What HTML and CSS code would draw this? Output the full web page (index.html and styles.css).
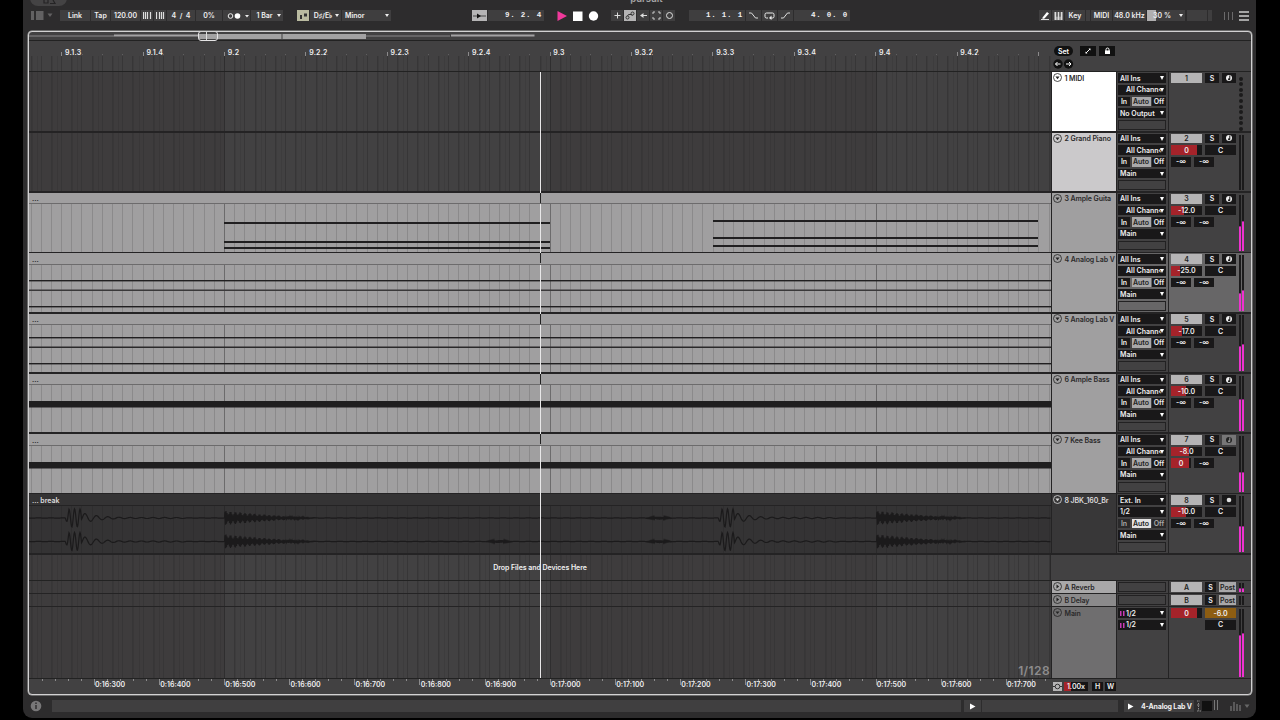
FILE: index.html
```html
<!DOCTYPE html>
<html lang="en">
<head>
    <meta charset="UTF-8">
    <meta name="viewport" content="width=device-width, initial-scale=1.0">
    <title>pursuit</title>
    <link rel="stylesheet" href="styles.css">
</head>
<body>

<div class="window">
    <div class="tab"><svg width="14" height="5" viewBox="0 0 14 5"><path d="M1 0v3h4V0M7 3.500h5L10 0" fill="none" stroke="#252425" stroke-width="1.200"/></svg></div>
    <div class="title">pursuit</div>

    <!-- Control bar -->
    <div class="toolbar">
        <svg class="browser-icon" width="24" height="11" viewBox="0 0 24 11"><path d="M0 1h3v9H0zM5 1h7.500v9H5z" fill="#626162"/><path d="M16.500 3.500h5L19 7z" fill="#626162"/></svg>
        <div class="group group-tempo">
            <span class="btn w-link">Link</span>
            <span class="btn w-tap">Tap</span>
            <span class="btn w-tempo">120.00</span>
            <span class="btn w-nudge"><svg width="9" height="7"><path d="M.5 0v7M2.500 0v7M4.500 0v7M7.500 0v7" stroke="#ddd" stroke-width="1.200"/></svg></span>
            <span class="btn w-nudge"><svg width="9" height="7"><path d="M.5 0v7M3.500 0v7M5.500 0v7M7.500 0v7" stroke="#ddd" stroke-width="1.200"/></svg></span>
            <span class="btn w-sig">4&nbsp; / &nbsp;4</span>
            <span class="btn w-groove">0%</span>
            <span class="btn w-metro"><svg width="24" height="8"><circle cx="5.500" cy="4" r="2.300" fill="none" stroke="#eee"/><circle cx="12.500" cy="4" r="2.800" fill="#fff"/><path d="M20 3h4L22 5.500z" fill="#eee"/></svg></span>
            <span class="btn w-quant">1 Bar<i class="arr"></i></span>
        </div>
        <div class="group group-scale">
            <span class="btn w-scale"><svg width="8" height="8"><path d="M1 3h2v4H1zM3 4.500h2v-3h3v3H5" fill="#333"/></svg></span>
            <span class="btn w-root">D♯/E♭<i class="arr"></i></span>
            <span class="btn w-mode">Minor<i class="arr"></i></span>
        </div>
        <div class="group group-pos">
            <span class="btn lit w-follow"><svg width="13" height="8"><path d="M0 4h13" stroke="#444"/><path d="M4 1.500l4 2.500-4 2.500z" fill="#111"/></svg></span>
            <span class="btn mono w-pos">9. 2. 4</span>
        </div>
        <div class="transport">
            <svg width="42" height="12" viewBox="0 0 42 12"><path d="M.5 1v10L10 6z" fill="#f0399b"/><path d="M16 1.500h9.500v9.500H16z" fill="#fff"/><circle cx="36.500" cy="6" r="4.700" fill="#fff"/></svg>
        </div>
        <div class="group group-edit">
            <span class="btn"><svg width="9" height="9"><path d="M4.500 1.500v6M1.500 4.500h6" stroke="#ddd"/></svg></span>
            <span class="btn lit"><svg width="10" height="9"><circle cx="2.500" cy="6.500" r="1.500" fill="none" stroke="#333"/><circle cx="7.500" cy="2.500" r="1.500" fill="none" stroke="#333"/><path d="M2.500 5l1-1.500h2.500l1.500 1" fill="none" stroke="#333"/></svg></span>
            <span class="btn"><svg width="9" height="9"><path d="M2 4.500h6" stroke="#ddd"/><path d="M1 4.500l3.500-2.500v5z" fill="#ddd"/></svg></span>
            <span class="btn"><svg width="9" height="9"><path d="M1 3V1h2M6 1h2v2M8 6v2H6M3 8H1V6" fill="none" stroke="#ccc"/></svg></span>
            <span class="btn"><svg width="9" height="9"><circle cx="4.500" cy="4.500" r="3" fill="none" stroke="#ddd"/></svg></span>
        </div>
        <div class="group group-loop">
            <span class="btn mono w-pos">1. 1. 1</span>
            <span class="btn w-punch"><svg width="11" height="9"><path d="M1 2h2.500l4 5H10" fill="none" stroke="#ddd"/></svg></span>
            <span class="btn w-punch"><svg width="11" height="9"><path d="M4 7H2.500Q1 7 1 5.500v-2Q1 2 2.500 2h6Q10 2 10 3.500v2Q10 7 8.500 7H7" fill="none" stroke="#eee"/><path d="M7.500 4.500v4.500L5 7z" fill="#eee"/></svg></span>
            <span class="btn w-punch"><svg width="11" height="9"><path d="M1 7h2.500l4-5H10" fill="none" stroke="#ddd"/></svg></span>
            <span class="btn mono w-pos">4. 0. 0</span>
        </div>
        <div class="group group-status">
            <span class="btn w-icon"><svg width="9" height="9"><path d="M1.500 6.500l4.500-5.500 2 1.500-4.500 5-2 .5z" fill="#fff"/><path d="M0 8.500h8" stroke="#ddd"/></svg></span>
            <span class="btn w-icon"><svg width="9" height="8"><path d="M.5 0h8v8h-8z" fill="#ddd"/><path d="M3 4v4M6 4v4" stroke="#333" stroke-width=".7"/><path d="M3 0v4.500M6 0v4.500" stroke="#333" stroke-width="1.300"/></svg></span>
            <span class="btn w-key">Key</span>
            <span class="btn w-led"></span>
            <span class="btn w-midi">MIDI</span>
            <span class="btn w-rate">48.0 kHz</span>
            <span class="btn w-cpu">30 %<i class="arr"></i></span>
            <span class="btn w-disk"></span>
            <span class="btn w-led"></span>
        </div>
        <svg class="view-icon" width="26" height="12" viewBox="0 0 26 12"><path d="M1.500 2v8M5.500 2v8M9.500 2v8" stroke="#6b6a6b"/><path d="M16 2h10M16 6h10M16 10h10" stroke="#ccc" stroke-width="1.500"/></svg>
    </div>

    <!-- Arrangement view -->
    <div class="arranger">
        <div class="overview">
            <svg width="1222" height="9">
                <path d="M0 4h85M337 4h84" stroke="#8a898a"/>
                <path d="M85 3.500h85M422 3.500h83.500" stroke="#a3a2a3" stroke-width="2"/>
                <path d="M170 2h82.500v5H170zM253.500 2H337v5h-83.500z" fill="#a3a2a3"/>
            </svg>
            <div class="zoom-box"></div>
        </div>
        <div class="ruler">
            <div class="beat-ruler">
                <svg class="ruler-grid" id="ruler-grid" width="1022" height="31"></svg>
                <div class="beats" id="beats"></div>
            </div>
            <div class="ruler-tools">
                <div class="tools-line">
                    <span class="pill">Set</span>
                    <span class="tool"><svg width="8" height="8"><path d="M2 6l4-4" stroke="#fff"/><path d="M1.500 6.500v-2l2 2zM6.500 1.500v2l-2-2z" fill="#fff"/></svg></span>
                    <span class="tool"><svg width="7" height="8"><path d="M1 3.500h5V7H1z" fill="#fff"/><path d="M2 4V2.500Q2 1 3.500 1T5 2.500V4" fill="none" stroke="#fff"/></svg></span>
                </div>
                <div class="tools-line tools-nav">
                    <svg width="22" height="10"><circle cx="5" cy="5" r="4.700" fill="#111"/><circle cx="15.500" cy="5" r="4.700" fill="#111"/><path d="M2.500 5h5M4.500 3l-2 2 2 2M13 5h5M16 3l2 2-2 2" fill="none" stroke="#fff"/></svg>
                </div>
            </div>
        </div>

        <div class="tracks" id="tracks"></div>

        <div class="drop-row">
            <div class="lane"><svg class="lane-grid" id="drop-grid" width="1022" height="25"></svg><span class="drop-text">Drop Files and Devices Here</span></div>
            <div class="drop-side"></div>
        </div>

        <div class="returns" id="returns"></div>

        <div class="row main-row">
            <div class="lane"><svg class="lane-grid" id="main-grid" width="1022" height="71"></svg><span class="grid-size">1/128</span></div>
            <div class="name name-main"><svg class="fold" width="9" height="9"><circle cx="4.500" cy="4.500" r="4" fill="none" stroke="#222" stroke-width=".8"/><path d="M2.500 3.500h4L4.500 6z" fill="#222"/></svg><span>Main</span></div>
            <div class="io">
                <span class="box select cue">1/2</span>
                <span class="box select cue">1/2</span>
            </div>
            <div class="mixer">
                <div class="controls">
                    <div class="line"><span class="box vol"><b style="width: 26px"></b><em>0</em></span><span class="box pan amber">-6.0</span></div>
                    <div class="line"><span class="gap-vol"></span><span class="box pan">C</span></div>
                </div>
                <div class="meter"><i style="height: 42px"></i><i style="height: 44px"></i></div>
            </div>
        </div>

        <div class="time-row">
            <div class="time-ruler">
                <svg class="ruler-grid" id="time-ticks" width="1022" height="14"></svg>
                <div class="times" id="times"></div>
            </div>
            <div class="time-tools">
                <span class="fit"><svg width="9" height="9"><circle cx="4.500" cy="4.500" r="2.300" fill="none" stroke="#333"/><path d="M0 4.500h2M7 4.500h2" stroke="#333"/></svg></span>
                <span class="speed">1.00x</span>
                <span class="tool-sm">H</span>
                <span class="tool-sm">W</span>
            </div>
        </div>

        <div class="playhead"></div>
    </div>

    <!-- Status bar -->
    <div class="status">
        <svg class="info" width="12" height="12"><circle cx="6" cy="6" r="5.300" fill="#787778"/><path d="M6 5v4M6 2.500v1.500" stroke="#2b2a2b" stroke-width="1.400"/></svg>
        <div class="status-text"></div>
        <div class="status-play"><svg width="6" height="7"><path d="M0 .5v6L5.500 3.500z" fill="#fff"/></svg></div>
        <div class="status-clip"></div>
        <div class="status-play status-play-b"><svg width="6" height="7"><path d="M0 .5v6L5.500 3.500z" fill="#fff"/></svg></div>
        <div class="status-device">4-Analog Lab V</div>
        <svg class="device-icon" width="24" height="14"><path d="M1 2h3M1 6h3M1 12h4M2.500 4v8" stroke="#8b8a8b" stroke-dasharray="1.500 1"/><path d="M6 2h10v10H6z" fill="#111"/><path d="M18.500 1v10M21.500 1v10" stroke="#777"/></svg>
        <svg class="view-bars" width="22" height="10"><path d="M1 5v5M4 1v9M7 3v7M10 4v6" stroke="#777" stroke-width="1.200"/><path d="M14.500 3.500h5L17 7z" fill="#666"/></svg>
    </div>
</div>

<script src="script.js"></script>
</body>
</html>
```

FILE: styles.css
```css
* {
    box-sizing: border-box;
}

body {
    margin: 0;
    background: #000;
    overflow: hidden;
    font-family: Inter, "Liberation Sans", sans-serif;
    font-size: 7px;
    font-weight: 600;
    line-height: 1;
    color: #f0eff0;
}

svg {
    display: block;
    flex: none;
}

i, em {
    font-style: normal;
}

.window {
    position: relative;
    width: 1233px;
    height: 718px;
    margin-left: 23px;
    padding: 8px 4px 0 5px;
    background: #2d2c2d;
    border-radius: 0 0 9px 9px;
    overflow: hidden;
}

/* Cut-off tab and title at the top edge */
.tab {
    position: absolute;
    left: 7px;
    top: -10px;
    width: 37px;
    height: 16px;
    padding: 10px 0 0 13px;
    border-radius: 8px;
    background: #444344;
}

.title {
    position: absolute;
    left: 0;
    top: -6px;
    width: 1247px;
    text-align: center;
    font-size: 9.5px;
    color: #a5a4a5;
}

/* Toolbar */
.toolbar {
    display: flex;
    align-items: center;
    height: 15px;
}

.group {
    display: flex;
    gap: 1px;
}

.btn {
    position: relative;
    display: flex;
    align-items: center;
    justify-content: center;
    height: 11px;
    background: #3f3e3f;
    white-space: nowrap;
}

.lit {
    background: #b5b4b5;
}

.arr {
    position: absolute;
    right: 2px;
    top: 4px;
    border: 2px solid transparent;
    border-top: 3px solid #eee;
    border-bottom: 0;
}

.browser-icon { margin-left: 3px; }
.group-tempo { margin-left: 5px; }
.w-link { width: 30px; }
.w-tap { width: 19px; }
.w-tempo { width: 29px; }
.w-nudge { width: 12px; }
.w-sig { width: 28px; }
.w-groove { width: 26px; }
.w-metro { width: 27px; }
.w-quant { width: 32px; padding-right: 5px; }

.group-scale { margin-left: 14px; }
.w-scale { width: 12px; background: #b9baa0; }
.w-root { width: 31px; padding-right: 5px; }
.w-mode { width: 49px; justify-content: flex-start; padding-left: 3px; }

.group-pos { margin-left: 81px; }
.w-follow { width: 15px; }
.w-pos { width: 56px; justify-content: flex-end; padding-right: 2px; }

.mono {
    font-family: "Liberation Mono", monospace;
    font-weight: 700;
    font-size: 7.5px;
    letter-spacing: 0.8px;
}

.transport { margin-left: 13px; }

.group-edit { margin-left: 12px; }
.group-edit .btn { width: 12px; }

.group-loop { margin-left: 14px; }
.w-punch { width: 15px; }

.group-status { margin-left: auto; }
.w-icon { width: 12px; }
.w-key { width: 20px; }
.w-led { width: 4px; }
.w-midi { width: 21px; }
.w-rate { width: 33px; }
.w-cpu {
    width: 38px;
    padding-right: 8px;
    background: linear-gradient(90deg, #b0afb0 9px, #3f3e3f 9px);
}
.w-disk { width: 20px; margin-left: 1px; }
.view-icon { margin-left: 11px; margin-right: 3px; }

/* Arrangement frame */
.arranger {
    position: relative;
    display: flex;
    flex-direction: column;
    height: 664px;
    margin-top: 8px;
    border: 1px solid #d2d1d2;
    border-radius: 4px;
    box-shadow: 0 0 0 0.5px #aaa;
    background: #424142;
    overflow: hidden;
}

.overview {
    position: relative;
    flex: none;
    height: 9px;
    border-bottom: 1px solid #222;
}

.zoom-box {
    position: absolute;
    left: 169px;
    top: -1px;
    width: 20px;
    height: 10px;
    border: 1.5px solid #e5e4e5;
    border-radius: 3px;
    background: linear-gradient(90deg, transparent 7px, #ddd 7px, #ddd 8px, transparent 8px);
}

.ruler {
    display: flex;
    flex: none;
    height: 31.4px;
    border-bottom: 1px solid #222;
}

.beat-ruler, .time-ruler {
    position: relative;
    width: 1022px;
    overflow: hidden;
}

.ruler-grid, .lane-grid {
    position: absolute;
    left: 0;
    top: 0;
}

.beats {
    display: flex;
    padding: 8px 0 0 36px;
    letter-spacing: 0.2px;
}

.beats span {
    flex: none;
    width: 81.4px;
}

.ruler-tools {
    padding: 5px 0 0 3px;
}

.tools-line {
    display: flex;
    height: 10px;
}

.tools-nav {
    margin-top: 2.5px;
    margin-left: -1px;
}

.pill, .tool {
    display: flex;
    align-items: center;
    justify-content: center;
    height: 10px;
    background: #111;
    color: #fff;
}

.pill {
    width: 19px;
    margin-right: 7px;
    border-radius: 5px;
}

.tool {
    width: 16px;
    margin-right: 3px;
}

/* Track rows */
.tracks, .returns {
    flex: none;
}

.row {
    display: grid;
    grid-template-columns: 1022px 64px 51px 1fr;
    column-gap: 1px;
    background: #242324;
}

.track {
    height: 60.3px;
    padding-bottom: 1.7px;
}

.lane {
    position: relative;
    overflow: hidden;
    background: linear-gradient(90deg, #3e3c3d 195.5px, #424142 195.5px, #424142 521.5px, #3e3c3d 521.5px, #3e3c3d 847.5px, #424142 847.5px);
}

.lane.clip {
    display: flex;
    flex-direction: column;
    background: #a09fa0;
}

.clip-title {
    position: relative;
    flex: none;
    height: 11.5px;
    padding: 2.5px 3px 0;
    border-bottom: 1px solid #6c6b6c;
    background: #a09fa0;
    color: #222;
    z-index: 3;
}

.clip-title::after {
    content: "";
    position: absolute;
    left: 511px;
    top: 0;
    width: 1px;
    height: 10px;
    background: #222;
}

.lane.audio {
    background: #343334;
}

.audio .clip-title {
    z-index: auto;
    background: #343334;
    border-color: #242324;
    color: #dddcdd;
}

.audio .clip-title::after {
    display: none;
}

.name {
    display: flex;
    gap: 2.500px;
    padding: 0.900px 0 0 1px;
    background: #a09fa0;
    color: #2a292a;
    letter-spacing: -0.08px;
    white-space: nowrap;
    overflow: hidden;
}

.name span {
    padding-top: 1.500px;
}

.name-1 { background: #fff; }
.name-2 { background: #cbc9cb; }
.name-8 { background: #383738; color: #dddcdd; }
.name-a { background: #a9a8a9; }
.name-b { background: #8b8a8b; }
.name-main { background: #6f6e6f; }

.io {
    display: flex;
    flex-direction: column;
    gap: 2px;
    padding: 0.900px 2px 0 1px;
    background: #424142;
}

.mixer {
    display: flex;
    padding: 0.900px 0 0 2px;
    background: #424142;
}

.selected .io, .selected .mixer {
    background: #676667;
}

.box {
    position: relative;
    display: flex;
    align-items: center;
    justify-content: center;
    flex: none;
    height: 9.700px;
    background: #191819;
    color: #f0eff0;
    white-space: nowrap;
}

.select {
    justify-content: flex-start;
    padding-left: 2px;
}

.select::before {
    content: "";
    position: absolute;
    right: 2px;
    top: 3px;
    border: 2.5px solid transparent;
    border-top: 4px solid #fff;
    border-bottom: 0;
}

.indent { padding-left: 8px; }

.cue {
    padding-left: 8px;
    background: linear-gradient(#c63bb4, #c63bb4) 2px 3px / 1.5px 5px no-repeat, linear-gradient(#c63bb4, #c63bb4) 4.5px 3px / 1.5px 5px no-repeat, #191819;
}

.empty {
    background: none;
    border: 1px solid #222122;
}

.monitor {
    display: flex;
    gap: 1.500px;
    height: 9.700px;
}

.monitor .box { width: 12px; }
.monitor .box:nth-child(2) { width: 19px; background: #a9a8a9; color: #222; }
.monitor .box:nth-child(3) { width: 14px; }
.monitor.dim .box { color: #aaa; background: #2a292a; }
.monitor.dim .box:nth-child(2) { background: #e3e2e3; color: #222; }

.controls {
    display: flex;
    flex-direction: column;
    gap: 2px;
    width: 67px;
}

.line {
    display: flex;
    gap: 3px;
}

.num { width: 31px; background: #b5b4b5; color: #222; }
.solo { width: 14px; }
.arm { width: 14px; }
.vol { width: 31px; }
.gap-vol { width: 31px; }
.pan { width: 31px; }
.amber { background: #8d5d12; }
.send { width: 20px; }
.post { width: 17px; background: #a9a8a9; color: #222; }
.arm-off { background: #777677; }

.vol b, .send b {
    position: absolute;
    left: 0;
    top: 0;
    height: 100%;
    background: #a5232a;
}

.vol em, .send em {
    position: relative;
}

.meter {
    display: flex;
    align-items: flex-end;
    gap: 1px;
    width: 5px;
    margin: 1px 0 1px 1px;
    background: linear-gradient(#1b1a1b, #1b1a1b) 0 0 / 2px 100% no-repeat, linear-gradient(#1b1a1b, #1b1a1b) 3px 0 / 2px 100% no-repeat;
}

.meter i {
    width: 2px;
    background: #ee32cf;
    border-top: 1px solid #9a2089;
}

.meter-dots {
    display: flex;
    flex-direction: column;
    gap: 1.55px;
    margin: 3.5px 0 0 1px;
}

.meter-dots i {
    width: 4px;
    height: 4px;
    border-radius: 50%;
    background: #1b1a1b;
}

/* Drop area between tracks and returns */
.drop-row {
    display: flex;
    flex: none;
    height: 26px;
    border-bottom: 1px solid #222;
}

.drop-row .lane {
    width: 1022px;
    border-right: 1px solid #2a292a;
}

.drop-text {
    position: absolute;
    left: 0;
    top: 9px;
    width: 100%;
    padding-left: 1px;
    text-align: center;
    letter-spacing: -0.05px;
}

.return {
    height: 13px;
    padding-bottom: 1px;
}

.return .name { padding-top: 1.5px; }
.return .io, .return .mixer { padding-top: 1.5px; }
.return .solo { width: 11px; }

.main-row {
    flex: none;
    height: 71px;
}

.main-row .name, .main-row .io, .main-row .mixer { padding-top: 1.5px; }

.grid-size {
    position: absolute;
    right: 1px;
    bottom: 0;
    font-size: 12px;
    font-weight: 600;
    letter-spacing: 0.4px;
    line-height: 15px;
    color: #8d8c8d;
}

.time-row {
    display: flex;
    flex: 1;
    border-top: 1px solid #222;
}

.times {
    display: flex;
    padding: 2px 0 0 66px;
}

.times span {
    flex: none;
    width: 65.15px;
}

.time-tools {
    display: flex;
    align-items: flex-start;
    padding: 3px 0 0 2px;
}

.fit, .speed, .tool-sm {
    display: flex;
    align-items: center;
    justify-content: center;
    height: 9px;
    background: #151415;
}

.fit { width: 9px; background: #b5b4b5; }
.speed { width: 24px; margin: 0 4px 0 2px; background: linear-gradient(90deg, #a5232a 7px, #151415 7px); }
.tool-sm { width: 11px; margin-right: 2px; }

.playhead {
    position: absolute;
    left: 511px;
    top: 40px;
    width: 1px;
    height: 606px;
    background: #e8e7e8;
    z-index: 2;
}

/* Status bar */
.status {
    display: flex;
    align-items: center;
    height: 12px;
    margin-top: 5px;
}

.info { margin-left: 2px; }
.status-text { width: 909px; height: 12px; margin-left: 10px; background: #403f40; }
.status-play { display: flex; align-items: center; justify-content: center; width: 17px; height: 12px; margin-left: 3px; background: #403f40; }
.status-clip { width: 136px; height: 12px; margin-left: 1px; background: #403f40; }
.status-play-b { width: 13px; margin-left: 6px; }
.status-device { width: 57px; height: 12px; padding: 3px 0 0 4px; background: #403f40; font-weight: 700; letter-spacing: -0.15px; white-space: nowrap; }
.device-icon { margin-left: 2px; }
.view-bars { margin-left: 10px; }
```

FILE: script.js
```js
const BAR = 195.5;      // x of beat 9.2 inside a lane
const STEP = 10.18;     // one grid line
const LANE = 1022;

// Vertical grid lines, stronger on every beat
function grid(top, height, color, strong, soft) {
    let out = '';
    for (let k = -19; BAR + k * STEP < LANE; k++) {
        const x = Math.floor(BAR + k * STEP);
        if (x < 0) continue;
        if (soft) out += `<rect x="${x + (k % 2 ? 1 : -4)}" y="${top}" width="1" height="${height}" fill="${soft}"/>`;
        out += `<rect x="${x}" y="${top}" width="1" height="${height}" fill="${k % 32 === 0 ? strong : color}"/>`;
    }
    return out;
}

function darkGrid(top, height) {
    return grid(top, height, '#373637', '#2f2e2f', 'rgba(0, 0, 0, 0.07)');
}

function notes(list) {
    return list.map(n => `<rect x="${n[0]}" y="${n[1]}" width="${n[2]}" height="${n[3]}" fill="${n[4] || '#201f20'}"/>`).join('');
}

// Audio waveform for one channel
function wave(cy, second) {
    const kicks = [36, 689];
    const snares = [195.5, 847.5];
    let d = `M0 ${cy}`;
    for (let x = 1; x < LANE; x += 0.5) {
        let y = Math.sin(x * 0.5) * 0.2;
        kicks.forEach(k => {
            const t = x - k;
            if (t > 0 && t < 120) {
                const amp = t < 17 ? 9 : 5 * Math.exp(-(t - 17) / 18) + 0.3;
                y += Math.sin(t * (t < 17 ? 1.15 : 0.55)) * amp * Math.min(1, t / 4);
            }
        });
        snares.forEach(s => {
            const t = x - s;
            if (t > 0 && t < 95) {
                const amp = 7 * Math.pow(1 - t / 95, 1.3) * (0.72 + 0.28 * Math.sin(t * 1.3));
                y += (Math.round(x * 2) % 2 ? 1 : -1) * amp;
            }
        });
        const fuzz = [630];
        if (second) fuzz.push(470);
        fuzz.forEach(f => {
            const t = Math.abs(x - f);
            if (t < 14) y += (Math.round(x * 2) % 2 ? 1 : -1) * 1.4 * (1 - t / 14);
        });
        d += `L${x} ${(cy + y).toFixed(2)}`;
    }
    return `<path d="${d}" fill="none" stroke="#1b1a1b" stroke-width="1.2"/>`;
}

const tracks = [
    { name: 'MIDI', out: 'No Output', midi: true },
    { name: 'Grand Piano', vol: '0', fill: 26, meter: [0, 0] },
    { name: 'Ample Guita', vol: '-12.0', fill: 13, meter: [25, 30],
      notes: [[195, 18, 326, 2], [195, 37, 326, 2], [195, 43, 326, 2], [684, 16, 325, 2], [684, 33, 325, 2], [684, 41, 325, 2]] },
    { name: 'Analog Lab V', vol: '-25.0', fill: 9, meter: [18, 21], selected: true,
      notes: [[0, 15, LANE, 1.4], [0, 24.500, LANE, 1.500, '#3a393a'], [0, 41, LANE, 1.4]] },
    { name: 'Analog Lab V', vol: '-17.0', fill: 11, meter: [25, 27],
      notes: [[0, 12, LANE, 1.4], [0, 21.500, LANE, 1.500, '#2a292a'], [0, 38, LANE, 1.4]] },
    { name: 'Ample Bass', vol: '-10.0', fill: 15, meter: [32, 32], notes: [[0, 16, LANE, 6.500]] },
    { name: 'Kee Bass', vol: '-8.0', fill: 18, meter: [20, 20], send: true, armOff: true, notes: [[0, 16, LANE, 6.500]] },
    { name: 'JBK_160_Br', vol: '-10.0', fill: 15, meter: [26, 26], audio: true }
];

function foldIcon(color, open) {
    const tri = open ? 'M2.500 3.500h4L4.500 6.200z' : 'M3.500 2.500v4L6.200 4.500z';
    return `<svg class="fold" width="9" height="9"><circle cx="4.500" cy="4.500" r="4" fill="none" stroke="${color}" stroke-width=".8"/><path d="${tri}" fill="${color}"/></svg>`;
}

function lane(t) {
    if (t.notes) {
        return `<div class="lane clip"><div class="clip-title">...</div>
            <svg width="${LANE}" height="48">${grid(0, 48, '#8b8a8b', '#6c6b6c')}${notes(t.notes)}</svg></div>`;
    }
    if (t.audio) {
        return `<div class="lane clip audio"><div class="clip-title">... break</div>
            <svg width="${LANE}" height="48">${grid(0, 48, '#2f2e2f', '#2a292a')}${wave(12)}${wave(35.5, true)}</svg></div>`;
    }
    return `<div class="lane"><svg class="lane-grid" width="${LANE}" height="59">${darkGrid(0, 59)}</svg></div>`;
}

function arm(t) {
    const icon = t.audio
        ? '<circle cx="4" cy="4" r="2.300" fill="#ddd"/>'
        : `<circle cx="4" cy="4" r="3" fill="${t.armOff ? '#222' : '#eee'}"/><path d="M4.800 1.500v4" stroke="${t.armOff ? '#999' : '#111'}"/><circle cx="4" cy="5.200" r="1" fill="${t.armOff ? '#999' : '#111'}"/>`;
    return `<span class="box arm ${t.armOff ? 'arm-off' : ''}"><svg width="8" height="8">${icon}</svg></span>`;
}

function trackRow(t, i) {
    const n = i + 1;
    const iconColor = t.audio ? '#ddd' : '#222';
    const levels = t.midi ? '' : `
        <div class="line"><span class="box vol"><b style="width: ${t.fill}px"></b><em>${t.vol}</em></span><span class="box pan">C</span></div>
        <div class="line"><span class="box send">${t.send ? '<b style="width: 18px"></b><em>0</em>' : '-∞'}</span><span class="box send">-∞</span></div>`;
    const meter = t.midi
        ? `<div class="meter-dots">${'<i></i>'.repeat(10)}</div>`
        : `<div class="meter">${t.meter.map(h => h ? `<i style="height: ${h}px"></i>` : '').join('')}</div>`;
    return `<div class="row track ${t.selected ? 'selected' : ''}">
        ${lane(t)}
        <div class="name name-${n}">${foldIcon(iconColor, true)}<span>${n} ${t.name}</span></div>
        <div class="io">
            <span class="box select">${t.audio ? 'Ext. In' : 'All Ins'}</span>
            <span class="box select ${t.audio ? '' : 'indent'}">${t.audio ? '1/2' : 'All Chann‹'}</span>
            <div class="monitor ${t.audio ? 'dim' : ''}"><span class="box">In</span><span class="box">Auto</span><span class="box">Off</span></div>
            <span class="box select">${t.out || 'Main'}</span>
            <span class="box empty"></span>
        </div>
        <div class="mixer">
            <div class="controls">
                <div class="line"><span class="box num">${n}</span><span class="box solo">S</span>${arm(t)}</div>${levels}
            </div>
            ${meter}
        </div>
    </div>`;
}

function returnRow(letter, name, level) {
    return `<div class="row return">
        <div class="lane"><svg class="lane-grid" width="${LANE}" height="12">${darkGrid(0, 12)}</svg></div>
        <div class="name name-${letter.toLowerCase()}">${foldIcon('#222', false)}<span>${letter} ${name}</span></div>
        <div class="io"><span class="box empty"></span></div>
        <div class="mixer">
            <div class="controls"><div class="line"><span class="box num">${letter}</span><span class="box solo">S</span><span class="box post">Post</span></div></div>
            <div class="meter">${level ? `<i style="height: ${level}px"></i><i style="height: ${level}px"></i>` : ''}</div>
        </div>
    </div>`;
}

document.getElementById('tracks').innerHTML = tracks.map(trackRow).join('');
document.getElementById('returns').innerHTML = returnRow('A', 'Reverb', 4) + returnRow('B', 'Delay', 0);
document.getElementById('drop-grid').innerHTML = darkGrid(0, 25);
document.getElementById('main-grid').innerHTML = darkGrid(0, 71);

// Beat ruler
const beats = ['9.1.3', '9.1.4', '9.2', '9.2.2', '9.2.3', '9.2.4', '9.3', '9.3.2', '9.3.3', '9.3.4', '9.4', '9.4.2'];
document.getElementById('beats').innerHTML = beats.map(b => `<span>${b}</span>`).join('');
let ticks = darkGrid(15, 16);
for (let i = 0; i < 13; i++) {
    const x = 32.7 + i * 81.4;
    ticks += `<rect x="${Math.floor(x)}" y="11" width="1" height="4" fill="#8b8a8b"/>`;
    for (let j = 1; j < 4; j++) {
        ticks += `<rect x="${Math.floor(x + j * 20.35)}" y="13" width="1" height="1" fill="#605f60"/>`;
    }
}
document.getElementById('ruler-grid').innerHTML = ticks;

// Time ruler
let times = '';
for (let ms = 16300; ms <= 17700; ms += 100) {
    times += `<span>0:${Math.floor(ms / 1000)}:${String(ms % 1000).padStart(3, '0')}</span>`;
}
document.getElementById('times').innerHTML = times;
let marks = '';
for (let i = -4; i < 74; i++) {
    marks += `<rect x="${Math.floor(65.2 + i * 13.03)}" y="0" width="1" height="${i % 5 === 0 ? 6 : 2}" fill="#8b8a8b"/>`;
}
document.getElementById('time-ticks').innerHTML = marks;
```
